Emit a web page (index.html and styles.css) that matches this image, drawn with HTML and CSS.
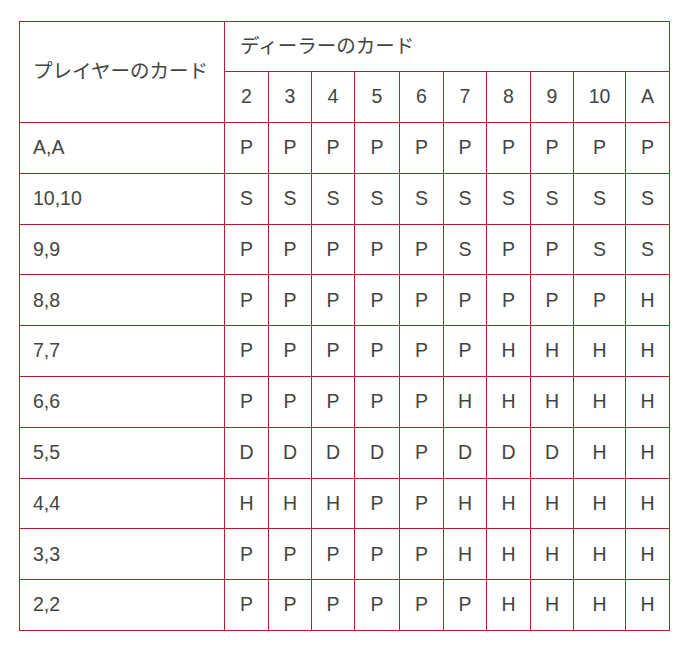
FILE: index.html
```html
<!DOCTYPE html>
<html lang="ja">
<head>
<meta charset="utf-8">
<title>ペア戦略表</title>
<link rel="stylesheet" href="styles.css">
</head>
<body>
<div class="wrap">
<table class="strategy">
  <colgroup>
    <col class="c-player">
    <col class="c44"><col class="c43"><col class="c43"><col class="c45"><col class="c44">
    <col class="c43"><col class="c44"><col class="c43"><col class="c52"><col class="c44">
  </colgroup>
  <thead>
    <tr class="h1">
      <th class="player-head" rowspan="2">プレイヤーのカード</th>
      <th class="dealer-head" colspan="10">ディーラーのカード</th>
    </tr>
    <tr class="h2">
      <th>2</th><th>3</th><th>4</th><th>5</th><th>6</th><th>7</th><th>8</th><th>9</th><th>10</th><th>A</th>
    </tr>
  </thead>
  <tbody>
    <tr><td class="pair">A,A</td><td>P</td><td>P</td><td>P</td><td>P</td><td>P</td><td>P</td><td>P</td><td>P</td><td>P</td><td>P</td></tr>
    <tr><td class="pair">10,10</td><td>S</td><td>S</td><td>S</td><td>S</td><td>S</td><td>S</td><td>S</td><td>S</td><td>S</td><td>S</td></tr>
    <tr><td class="pair">9,9</td><td>P</td><td>P</td><td>P</td><td>P</td><td>P</td><td>S</td><td>P</td><td>P</td><td>S</td><td>S</td></tr>
    <tr><td class="pair">8,8</td><td>P</td><td>P</td><td>P</td><td>P</td><td>P</td><td>P</td><td>P</td><td>P</td><td>P</td><td>H</td></tr>
    <tr><td class="pair">7,7</td><td>P</td><td>P</td><td>P</td><td>P</td><td>P</td><td>P</td><td>H</td><td>H</td><td>H</td><td>H</td></tr>
    <tr><td class="pair">6,6</td><td>P</td><td>P</td><td>P</td><td>P</td><td>P</td><td>H</td><td>H</td><td>H</td><td>H</td><td>H</td></tr>
    <tr><td class="pair">5,5</td><td>D</td><td>D</td><td>D</td><td>D</td><td>P</td><td>D</td><td>D</td><td>D</td><td>H</td><td>H</td></tr>
    <tr><td class="pair">4,4</td><td>H</td><td>H</td><td>H</td><td>P</td><td>P</td><td>H</td><td>H</td><td>H</td><td>H</td><td>H</td></tr>
    <tr><td class="pair">3,3</td><td>P</td><td>P</td><td>P</td><td>P</td><td>P</td><td>H</td><td>H</td><td>H</td><td>H</td><td>H</td></tr>
    <tr><td class="pair">2,2</td><td>P</td><td>P</td><td>P</td><td>P</td><td>P</td><td>P</td><td>H</td><td>H</td><td>H</td><td>H</td></tr>
  </tbody>
</table>
</div>
</body>
</html>
```
FILE: styles.css
```css
html, body {
  margin: 0;
  padding: 0;
  background: #ffffff;
}

.wrap {
  padding: 21px 0 0 19px;
}

.strategy {
  border-collapse: collapse;
  table-layout: fixed;
  width: 650px;
  font-family: "Liberation Sans", "Noto Sans CJK JP", Arial, sans-serif;
  font-size: 19.5px;
  color: #444444;
}

.c-player { width: 205px; }
.c43 { width: 43px; }
.c44 { width: 44px; }
.c45 { width: 45px; }
.c52 { width: 52px; }

.strategy th,
.strategy td {
  border: 1px solid #b51f2c;
  padding: 0;
  font-weight: normal;
  text-align: center;
  vertical-align: middle;
  line-height: 1.2;
}

.strategy .h1 { height: 50px; }
.strategy .h2 { height: 51px; }
.strategy tbody tr { height: 50.8px; }

.strategy .player-head,
.strategy .pair {
  text-align: left;
  padding-left: 13px;
}

.strategy .dealer-head {
  text-align: left;
  padding-left: 15px;
}
```
